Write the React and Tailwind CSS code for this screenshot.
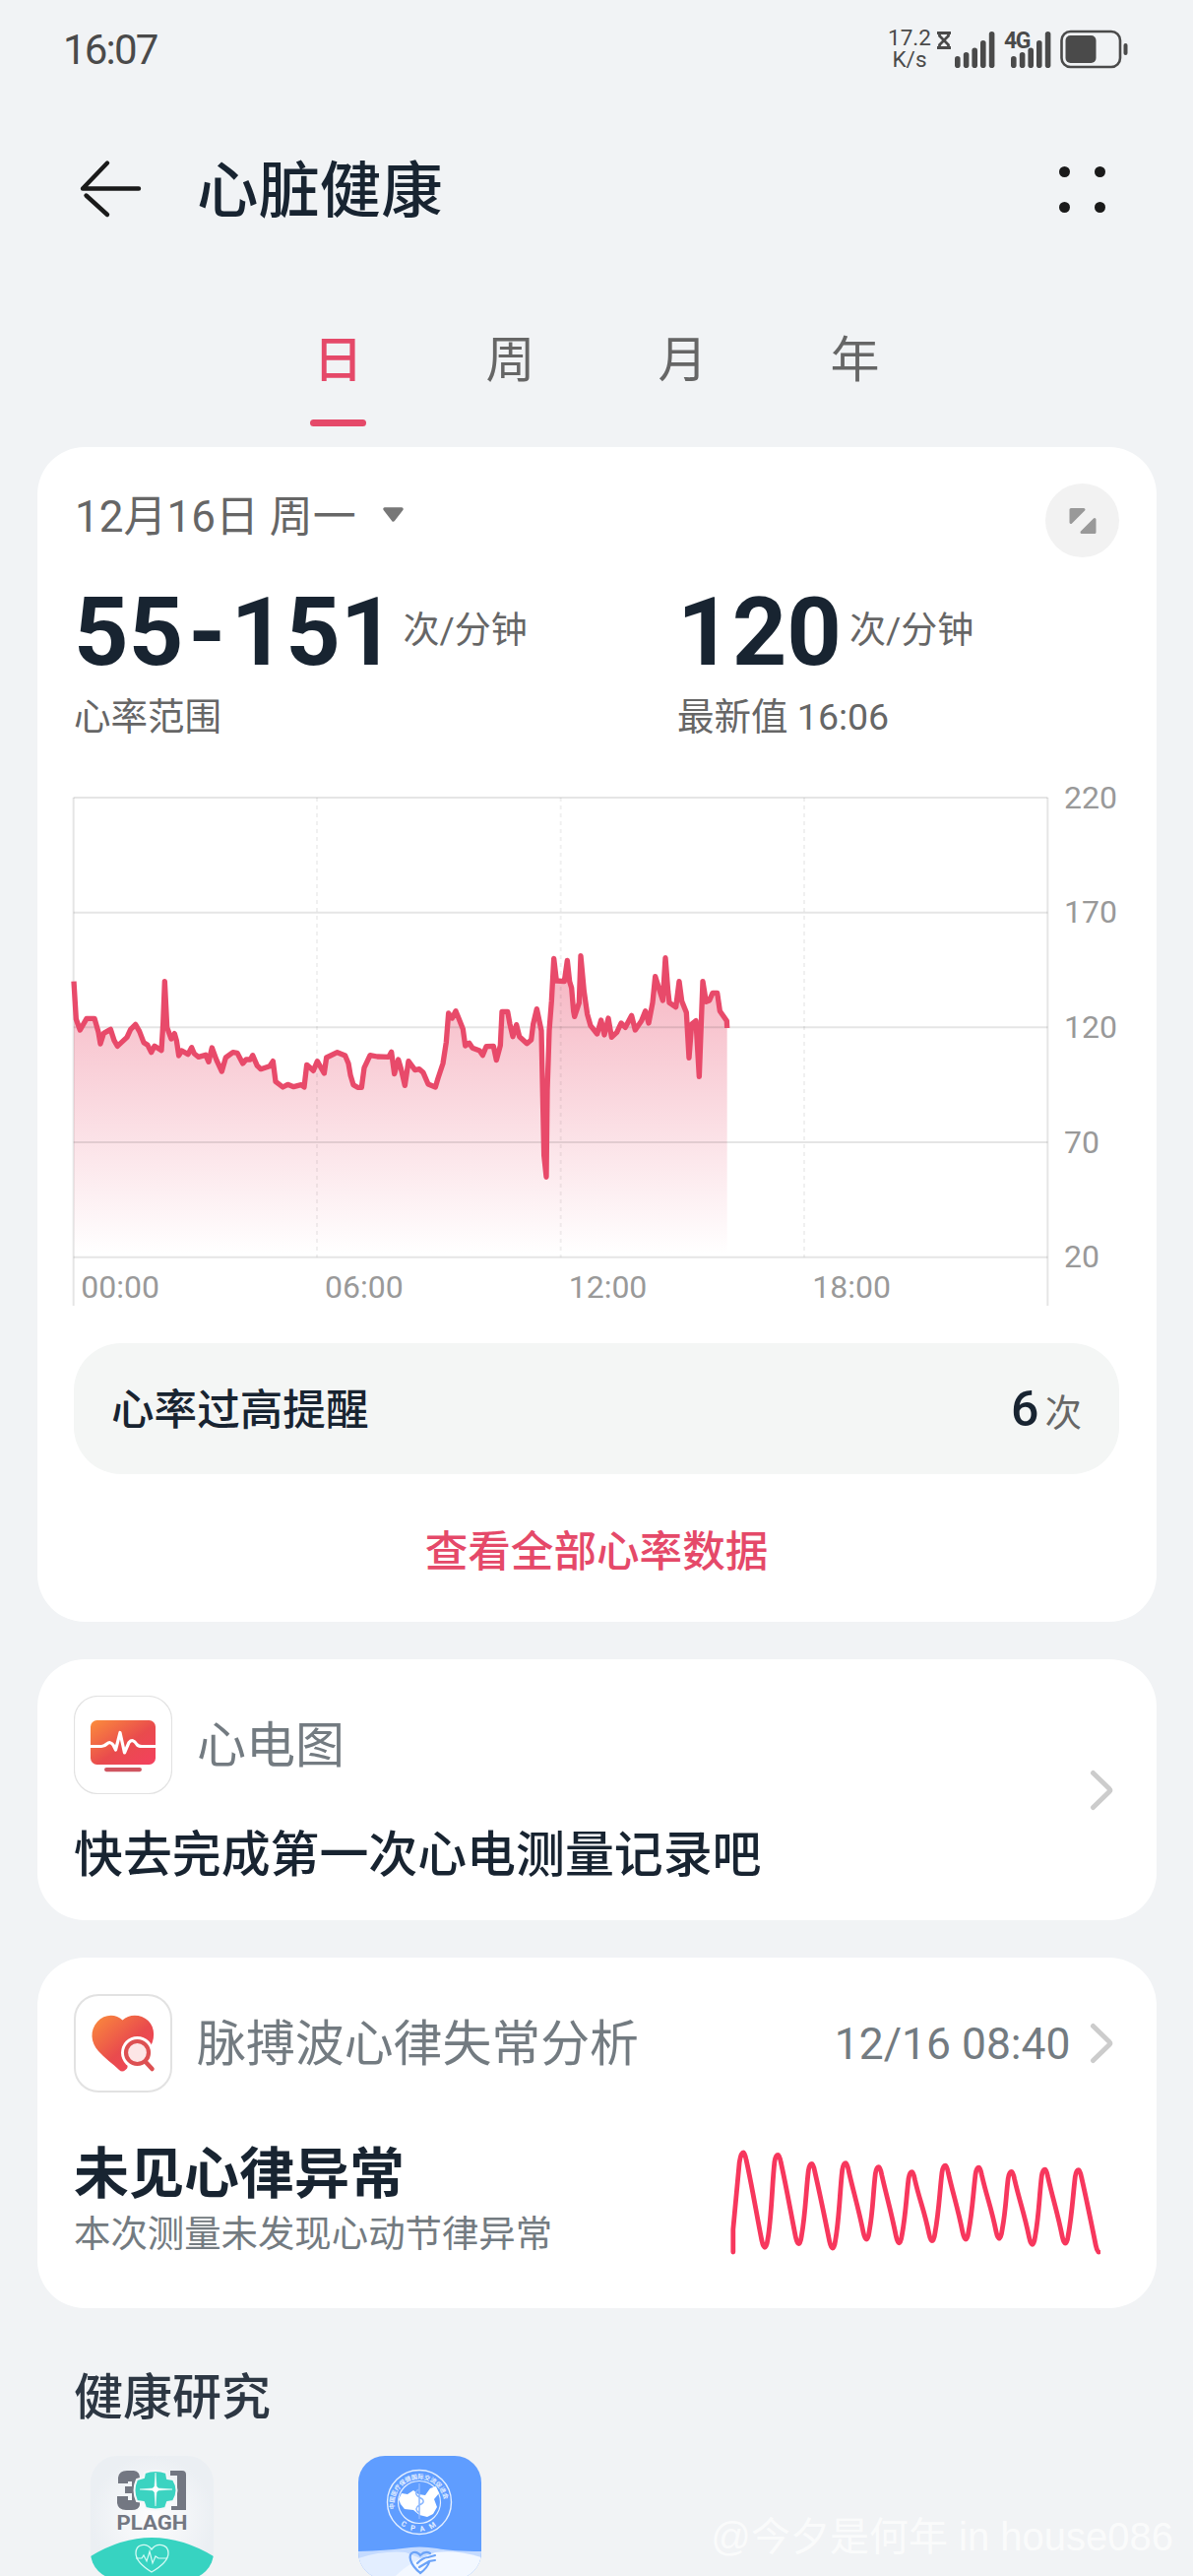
const tabs = ["日", "周", "月", "年"];

const bpmLabels = [220, 170, 120, 70, 20];
const hourLabels = ["00:00", "06:00", "12:00", "18:00"];

// Heart rate curve, in chart units (a grid row is 350 units high)
const samples = [
  [45, 170], [52, 285], [64, 318], [84, 283], [108, 283], [120, 325], [126, 360], [136, 328], [157, 316],
  [168, 350], [178, 367], [207, 340], [218, 316], [233, 301], [245, 322], [258, 356], [270, 364], [281, 386],
  [291, 367], [312, 380], [317, 300], [322, 170], [329, 310], [342, 345], [352, 329], [358, 350], [365, 396],
  [374, 381], [393, 392], [404, 371], [412, 390], [425, 400], [447, 394], [456, 415], [466, 372], [480, 410],
  [496, 444], [508, 402], [530, 386], [543, 388], [560, 420], [570, 408], [583, 408], [590, 395], [604, 427],
  [615, 437], [642, 428], [652, 413], [660, 475], [682, 492], [697, 484], [715, 491], [738, 485], [747, 492],
  [755, 424], [775, 442], [787, 413], [808, 450], [815, 402], [848, 386], [872, 396], [882, 420], [888, 455],
  [897, 485], [910, 493], [922, 493], [930, 433], [948, 395], [970, 399], [1005, 400], [1013, 385], [1022, 452],
  [1034, 408], [1042, 435], [1054, 487], [1065, 413], [1085, 440], [1098, 437], [1110, 448], [1125, 483],
  [1147, 492], [1155, 465], [1170, 420], [1180, 355], [1187, 267], [1198, 282], [1209, 260], [1217, 280],
  [1231, 315], [1238, 366], [1250, 358], [1260, 373], [1282, 381], [1291, 395], [1302, 368], [1324, 367],
  [1333, 410], [1345, 365], [1350, 262], [1367, 262], [1374, 300], [1383, 338], [1394, 302], [1403, 338],
  [1426, 359], [1439, 348], [1445, 300], [1456, 254], [1470, 320], [1475, 560], [1478, 700], [1485, 766],
  [1488, 500], [1494, 320], [1501, 230], [1508, 100], [1516, 168], [1540, 170], [1549, 106], [1556, 170],
  [1562, 190], [1568, 260], [1571, 277], [1585, 235], [1590, 92], [1600, 200], [1610, 270], [1620, 305],
  [1640, 330], [1652, 288], [1662, 333], [1674, 282], [1684, 340], [1700, 325], [1713, 297], [1726, 310],
  [1745, 274], [1756, 318], [1775, 290], [1787, 260], [1797, 297], [1809, 235], [1817, 155], [1828, 190],
  [1840, 228], [1848, 98], [1856, 200], [1860, 235], [1880, 248], [1890, 170], [1898, 230], [1912, 265],
  [1920, 403], [1928, 300], [1941, 290], [1951, 460], [1962, 170], [1972, 232], [1982, 228], [1992, 205],
  [2006, 205], [2014, 260], [2035, 290], [2036, 312],
];

// Pulse wave: [peak x, peak y, trough x, trough y]
const beats = [
  [19.2, 9.9, 40.9, 106.3],
  [54.4, 12.4, 75.3, 102.6],
  [88.8, 21.4, 109.7, 107.1],
  [123.2, 20.6, 144.1, 98.1],
  [156.8, 24.7, 177.3, 101.8],
  [190.5, 29.7, 210.9, 99.7],
  [224.5, 23.1, 245, 98.1],
  [258.5, 25.2, 279, 97.3],
  [291.7, 29.3, 312.6, 103.4],
  [325.7, 27.2, 346.2, 102.2],
  [359.8, 27.6, 380.2, 111],
];

const linePath = "M" + samples.map((p) => p.join(" ")).join("L");
const areaPath = `${linePath}V1010H45Z`;

const wavePath = beats.reduce((d, [px, py, tx, ty], i) => {
  // rising edge
  if (i === 0) {
    d += `L${px - 4} ${py + 10}`;
  } else {
    const [, , x, y] = beats[i - 1];
    d += `Q${x + 2} ${y} ${x + 3} ${y - 8}`;
    d += `C${x + 7} ${y - 30} ${px - 6} ${py + 28} ${px - 3.5} ${py + 7}`;
  }
  d += `Q${px - 2.5} ${py} ${px} ${py}`;
  // falling edge
  d += `Q${px + 1.5} ${py} ${px + 3} ${py + 8}`;
  d += `C${px + 8} ${py + 30} ${tx - 8} ${ty - 32} ${tx - 3} ${ty - 7}`;
  return d + `Q${tx - 1.5} ${ty} ${tx} ${ty}`;
}, "M8.8 111V88");

const Signal = () => (
  <svg className="w-[41px] h-[37px]" viewBox="0 0 41 37" fill="#4a4a4a">
    <rect x="0" y="25" width="5.6" height="12" rx="2.8" />
    <rect x="8.8" y="21" width="5.6" height="16" rx="2.8" />
    <rect x="17.4" y="16.5" width="5.6" height="20.5" rx="2.8" />
    <rect x="26" y="9" width="5.6" height="28" rx="2.8" />
    <rect x="34.8" y="0" width="5.6" height="37" rx="2.8" />
  </svg>
);

const StatusBar = () => (
  <div className="h-[100px] pl-[64px] pr-[66px] flex items-center justify-between text-[#4a4a4a]">
    <div className="text-[42px] tracking-[-1.8px]">16:07</div>
    <div className="flex items-center h-[42px]">
      <div className="mt-[-2px] flex flex-col items-center text-[22.5px] leading-[22px] w-[42px]">
        <span className="h-[22px]">17.2</span>
        <span className="h-[22px]">K/s</span>
      </div>
      <svg className="w-[14px] h-[18px] ml-[7px] mb-[18px]" viewBox="0 0 14 18" fill="none" stroke="#4a4a4a" strokeWidth="2.8">
        <path d="M0 1.5H14M0 16.5H14M2.5 2V4.5L11.5 13.5V16M11.5 2V4.5L2.5 13.5V16" />
      </svg>
      <div className="ml-[4px]"><Signal /></div>
      <div className="ml-[16px] relative">
        <Signal />
        <span className="absolute left-[-7px] top-[-2px] text-[23px] leading-[23px] font-bold tracking-[-1.5px]">4G</span>
      </div>
      <svg className="w-[69px] h-[40px] ml-[9px]" viewBox="0 0 69 40">
        <rect x="1.5" y="2" width="59.5" height="36" rx="9" fill="none" stroke="#4a4a4a" strokeWidth="2.6" />
        <rect x="5.5" y="6" width="31" height="28" rx="5" fill="#4a4a4a" />
        <rect x="64.5" y="14" width="4" height="12" rx="2" fill="#4a4a4a" />
      </svg>
    </div>
  </div>
);

const Header = () => (
  <header className="h-[184px] pl-[80px] pr-[89px] flex items-center">
    <svg className="w-[64px] h-[64px]" viewBox="0 0 64 64" fill="none" stroke="#1a1a1a" strokeWidth="4.4" strokeLinecap="round" strokeLinejoin="round">
      <path d="M61 31.5H4L29 5.5M7.5 38.5L29 58" />
    </svg>
    <h1 className="ml-[56px] pt-[6px] text-[62.4px] font-medium text-[#182431]">心脏健康</h1>
    <div className="ml-auto grid grid-cols-2 gap-x-[25px] gap-y-[25px]">
      {[0, 1, 2, 3].map((i) => (
        <span key={i} className="size-[11px] rounded-full bg-[#1a1a1a]"></span>
      ))}
    </div>
  </header>
);

const Tabs = () => (
  <nav className="h-[170px] pt-[44px] flex justify-center text-[50px]">
    {tabs.map((tab, i) => (
      <div
        key={tab}
        className={i === 0 ? "w-[175px] flex flex-col items-center text-[#e54969] font-medium" : "w-[175px] flex flex-col items-center text-[#666666]"}
      >
        <span className="leading-[76px]">{tab}</span>
        {i === 0 && <span className="mt-[22px] w-[57px] h-[7px] rounded-full bg-[#e54969]"></span>}
      </div>
    ))}
  </nav>
);

const Metric = ({ value, label }) => (
  <div>
    <div className="flex items-center h-[98px]">
      <span className="pt-[3px] text-[97px] leading-[98px] font-bold text-[#182431]">{value}</span>
      <span className="ml-[8px] pt-[2px] text-[37px]">次/分钟</span>
    </div>
    <div className="mt-[14px] h-[50px] leading-[50px] text-[37.5px]">{label}</div>
  </div>
);

const HeartRateChart = () => (
  <svg className="block w-[1062px] h-[530px] overflow-visible" viewBox="45 -420 3186 1590">
    <defs>
      <linearGradient id="area" gradientUnits="userSpaceOnUse" x1="0" y1="90" x2="0" y2="1000">
        <stop offset="0" stopColor="#e84a6a" stopOpacity="0.42" />
        <stop offset="1" stopColor="#e84a6a" stopOpacity="0" />
      </linearGradient>
    </defs>
    <path d={areaPath} fill="url(#area)" />
    <g stroke="#000" strokeOpacity="0.1" strokeWidth="6">
      {bpmLabels.map((bpm, i) => (
        <path key={bpm} d={`M44 ${-390 + i * 350}H3013`} />
      ))}
      <path d="M44 -390V1158M3013 -390V1158" />
    </g>
    <path d="M786 -390V1010M1529 -390V1010M2271 -390V1010" stroke="#000" strokeOpacity="0.06" strokeWidth="6" strokeDasharray="12 12" />
    <path d={linePath} fill="none" stroke="#e84a6a" strokeWidth="16" strokeLinejoin="round" />
    <g fill="#999999" fontSize="96">
      {bpmLabels.map((bpm, i) => (
        <text key={bpm} x="3063" y={-358 + i * 350}>{bpm}</text>
      ))}
      {hourLabels.map((hour, i) => (
        <text key={hour} x={67 + i * 743} y="1133">{hour}</text>
      ))}
    </g>
  </svg>
);

const HeartRateCard = () => (
  <section className="h-[1193px] px-[37.5px] pt-[37px] bg-white rounded-[48px] text-[#666666]">
    <div className="h-[75px] flex items-start justify-between">
      <div className="flex items-center h-[64px] pl-px text-[44px]">
        <span className="pt-[3px]">12月16日 周一</span>
        <svg className="ml-[26px] w-[23px] h-[16px]" viewBox="0 0 23 16">
          <path d="M3 2H20L11.5 13Z" fill="#777777" stroke="#777777" strokeWidth="3.5" strokeLinejoin="round" />
        </svg>
      </div>
      <div className="size-[75px] rounded-full bg-[#f2f2f2] flex items-center justify-center">
        <svg className="size-[28px]" viewBox="0 0 28 28" fill="#999999" stroke="#999999" strokeWidth="3" strokeLinejoin="round">
          <path d="M2 2.5H15L2 15.5ZM26 12.5V25.5H13Z" />
        </svg>
      </div>
    </div>
    <div className="mt-[25px] grid grid-cols-[613px_1fr]">
      <Metric value={<>55<span className="mx-[5px]">-</span>151</>} label="心率范围" />
      <Metric value="120" label="最新值 16:06" />
    </div>
    <div className="mt-[47px]">
      <HeartRateChart />
    </div>
    <div className="mt-[34px] h-[133px] px-[38px] rounded-[48px] bg-[#f4f6f5] flex items-center justify-between">
      <span className="pt-[4px] text-[43.6px] font-medium text-[#182431]">心率过高提醒</span>
      <span className="pt-[2px] flex items-baseline">
        <b className="text-[50px] font-medium text-[#182431]">6</b>
        <span className="ml-[6px] text-[37.5px]">次</span>
      </span>
    </div>
    <button className="mt-[48px] w-full text-center text-[43.6px] leading-[64px] font-medium text-[#e54969]">查看全部心率数据</button>
  </section>
);

const Chevron = () => (
  <svg className="w-[24px] h-[42px]" viewBox="0 0 24 42" fill="none" stroke="#cccccc" strokeWidth="5" strokeLinecap="round" strokeLinejoin="round">
    <path d="M3.5 3.5L20 19.5Q21.5 21 20 22.5L3.5 38.5" />
  </svg>
);

const EcgIcon = () => (
  <svg className="size-[100px]" viewBox="0 0 100 100">
    <defs>
      <linearGradient id="warm" x1="0" y1="0" x2="1" y2="1">
        <stop offset="0" stopColor="#fb8d3c" />
        <stop offset="0.55" stopColor="#e94b4d" />
        <stop offset="1" stopColor="#f4405f" />
      </linearGradient>
    </defs>
    <rect x="0.5" y="0.5" width="99" height="99" rx="24" fill="#fff" stroke="#e2e2e2" strokeWidth="1.2" />
    <rect x="17" y="25" width="66" height="45" rx="6.5" fill="url(#warm)" />
    <path d="M17 51.5H28Q31 51.5 33.5 49Q37 46 40 50L42.5 55L47 37.5L51.5 58L56 47.5Q60 43 64 49.5Q65.5 51.5 69 51.5H83" fill="none" stroke="#fff" strokeWidth="3.2" strokeLinejoin="round" />
    <rect x="31" y="73" width="38" height="4.2" rx="2.1" fill="#cf5560" />
  </svg>
);

const HeartSearchIcon = () => (
  <svg className="size-[100px]" viewBox="0 0 100 100">
    <rect x="1" y="1" width="98" height="98" rx="24" fill="#fff" stroke="#e2e2e2" strokeWidth="2" />
    <path d="M49.5 26.5C43 20 31 20 24 28C16 37 17 49 25 58C31 65 40 71 46 77Q49 80 52.5 77L76 56C83 47 83 34 75.5 27C68 20 56 20 49.5 26.5Z" fill="url(#warm)" />
    <circle cx="64.5" cy="59.5" r="16.5" fill="#fff" />
    <path d="M55 70L76 72L82 80L70 86L54 78Z" fill="#fff" />
    <circle cx="64.5" cy="59.5" r="11.5" fill="#fde6e6" stroke="#dd5052" strokeWidth="4.2" />
    <path d="M73 69L79.5 76" stroke="#dd5052" strokeWidth="4.5" strokeLinecap="round" />
  </svg>
);

const EcgCard = () => (
  <section className="mt-[38px] h-[265px] pl-[37.5px] pr-[44px] bg-white rounded-[48px] flex items-center">
    <div className="flex-1 self-start pt-[37px]">
      <div className="flex items-center">
        <EcgIcon />
        <span className="ml-[25px] pt-[3px] text-[50px] text-[#737b81]">心电图</span>
      </div>
      <div className="mt-[26px] text-[49.9px] leading-[72px] font-medium text-[#182431]">快去完成第一次心电测量记录吧</div>
    </div>
    <Chevron />
  </section>
);

const RhythmCard = () => (
  <section className="mt-[38px] h-[356px] pl-[37.5px] pr-[44px] pt-[37px] bg-white rounded-[48px] text-[#737b81]">
    <div className="flex items-center">
      <HeartSearchIcon />
      <span className="ml-[25px] pt-[3px] text-[49.9px]">脉搏波心律失常分析</span>
      <span className="ml-auto mr-[19px] pt-[3px] text-[44.4px]">12/16 08:40</span>
      <Chevron />
    </div>
    <div className="mt-[40px] flex justify-between">
      <div className="pt-[7px]">
        <div className="h-[72px] leading-[72px] text-[56px] font-bold text-[#182431]">未见心律异常</div>
        <div className="h-[50px] leading-[50px] text-[37.4px]">本次测量未发现心动节律异常</div>
      </div>
      <svg className="mt-[11px] mr-[13px] w-[382px] h-[120px]" viewBox="0 0 382 120" fill="none" stroke="#f7375d" strokeWidth="4.8" strokeLinecap="round" strokeLinejoin="round">
        <path d={wavePath} />
      </svg>
    </div>
  </section>
);

const PlaghIcon = () => (
  <svg className="size-[125px] rounded-[27px]" viewBox="0 0 125 125">
    <defs>
      <radialGradient id="pearl">
        <stop offset="0" stopColor="#fdfdfe" />
        <stop offset="1" stopColor="#ebeff3" />
      </radialGradient>
    </defs>
    <rect width="125" height="125" fill="url(#pearl)" />
    <path d="M28 28V22Q29 15 37 15H44Q50 16 50 22V50Q49 55 42 55H36Q28 55 27 48V41H38V45H42V38H35V31H42V26H38V28Z" fill="#737782" />
    <path d="M81 15H93Q97 15 97 19V55H82V51H88V20H81Z" fill="#737782" />
    <path d="M55 17Q66 13 77 17L78 23L84 24Q91 35 84 46L78 47L76 53Q66 56 56 53L54 47L47 46Q42 35 47 24L54 22Z" fill="#3bd3c1" stroke="#f5f7f9" strokeWidth="2" strokeLinejoin="round" />
    <path d="M66 17L67 31L69 33L83 34L69 35L67 37L66 51L65 37L63 35L50 34L63 33L65 31Z" fill="#fff" stroke="#fff" strokeWidth="0.5" />
    <text x="26.5" y="74.5" fontSize="19.500" fontWeight="700" fill="#737782" textLength="72" lengthAdjust="spacingAndGlyphs">PLAGH</text>
    <path d="M0 102Q62 64 125 102V125H0Z" fill="#37d3c1" />
    <path d="M62 118Q46 108 46 99C46 89 57 88 62 95C67 88 79 89 79 99Q79 108 62 118Z" fill="none" stroke="#d5fbf5" strokeWidth="1.3" />
    <path d="M46 104H52L54 101L57 107L60 97L63 109L66 102L69 104H78" fill="none" stroke="#d5fbf5" strokeWidth="1.2" />
  </svg>
);

const CpamIcon = () => (
  <svg className="size-[125px] rounded-[27px]" viewBox="0 0 125 125">
    <defs>
      <path id="ringTop" d="M37 54A25.5 25.5 0 1 1 87 54" />
      <path id="ringBottom" d="M34 58A30.5 30.5 0 0 0 90 58" />
    </defs>
    <rect width="125" height="125" fill="#5f9dff" />
    <circle cx="62" cy="47" r="32.5" fill="none" stroke="#e4efff" strokeWidth="1.4" />
    <circle cx="62" cy="47" r="21.5" fill="none" stroke="#e4efff" strokeWidth="1.2" />
    <path d="M41 44L44 38L50 39L56 35L61 39L68 40L73 33L79 31L82 38L77 44L80 52L76 59L70 62L62 60L56 55L47 54L43 49Z" fill="#fff" />
    <path d="M62 28V64M62 34C57 36 58 40 62 42C68 45 67 48 62 50C57 53 59 56 62 58" fill="none" stroke="#8bb7ff" strokeWidth="1.5" />
    <text fontSize="6.2" fill="#e4efff" fontWeight="700">
      <textPath href="#ringTop">中国医疗保健国际交流促进会</textPath>
    </text>
    <text fontSize="7.5" fill="#e4efff" fontWeight="700" textAnchor="middle" letterSpacing="6">
      <textPath href="#ringBottom" startOffset="53%">CPAM</textPath>
    </text>
    <path d="M0 97Q30 96 45 94Q62 91 80 94Q95 97 125 97V125H0Z" fill="#c5dbff" />
    <path d="M0 104Q25 96 48 98Q85 112 100 125H0Z" fill="#e3eeff" />
    <path d="M125 103Q100 95 78 98Q50 108 35 125H125Z" fill="#f3f8ff" />
    <path d="M63 119C52 110 50 100 56 98Q60 97 63 101Q68 96 73 99M63 119Q70 114 72 108M60 109Q66 103 71 103L78 101M62 113L72 107L78 106" fill="none" stroke="#6ba3f8" strokeWidth="2.2" strokeLinecap="round" />
  </svg>
);

const App = () => {
  return (
    <div className="relative w-[1212px] h-[2616px] overflow-hidden bg-[#f1f3f5] font-['Roboto','Noto_Sans_CJK_SC',sans-serif]">
      <StatusBar />
      <Header />
      <Tabs />
      <main className="px-[37.5px]">
        <HeartRateCard />
        <EcgCard />
        <RhythmCard />
        <div className="px-[37.5px] pt-[55px]">
          <h2 className="text-[50px] leading-[72px] font-medium text-[#2d3743]">健康研究</h2>
          <div className="mt-[23px] pl-[17px] flex gap-[147px]">
            <PlaghIcon />
            <CpamIcon />
          </div>
        </div>
      </main>
      {/* Watermark */}
      <div className="absolute right-[20px] bottom-[14px] text-[40px] leading-[52px] text-white/70 font-['Liberation_Sans','Noto_Sans_CJK_SC',sans-serif]">
        @今夕是何年 in house086
      </div>
    </div>
  );
}

export default App
